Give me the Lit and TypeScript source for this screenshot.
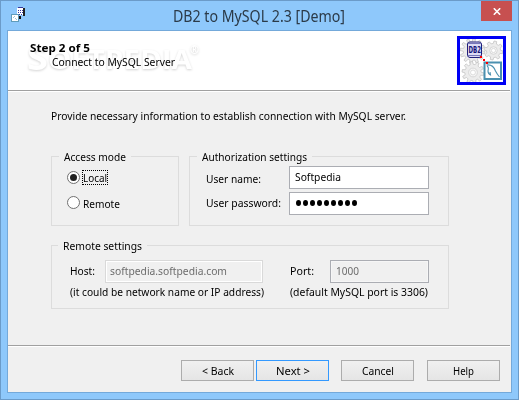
import { LitElement, html, css, svg } from "lit";
import { customElement, property, query } from "lit/decorators.js";

/** A line of text condensed or widened to an exact advance width. */
@customElement("fit-text")
class FitText extends LitElement {
  @property({ type: Number }) w = 0;
  @property() text = "";
  @query("span") span!: HTMLSpanElement;
  static styles = css`
    :host { display: block; height: 16px; line-height: 18px; white-space: pre; flex: none; }
    span { display: inline-block; transform-origin: 0 0; }
  `;
  render() { return html`<span>${this.text}</span>`; }
  updated() {
    this.style.width = this.w + "px";
    this.span.style.transform = `scaleX(${this.w / this.span.getBoundingClientRect().width})`;
  }
}

const t = (text: string, w: number, cls = "") => html`<fit-text class=${cls} .text=${text} .w=${w}></fit-text>`;

const gear = (cx: number, cy: number, r: number, n: number) => {
  let d = "";
  for (let i = 0; i < n; i++) {
    [[-0.3, 0.74], [-0.18, 1], [0.18, 1], [0.3, 0.74]].forEach(([o, k], j) => {
      const a = ((i + 0.25 + o) / n) * Math.PI * 2;
      d += `${i + j ? "L" : "M"}${(cx + Math.cos(a) * r * k).toFixed(2)} ${(cy + Math.sin(a) * r * k).toFixed(2)}`;
    });
  }
  return svg`<path d=${d + "Z"} fill="#ececec" stroke="#c4c4c4" stroke-width=".8"/>
    <circle cx=${cx} cy=${cy} r=${r * 0.4} fill="#f6f6f6" stroke="#cfcfcf" stroke-width=".8"/>
    <circle cx=${cx} cy=${cy} r=${r * 0.22} fill="#fff" stroke="#c9c9c9" stroke-width=".6"/>`;
};

@customElement("app-root")
class AppRoot extends LitElement {
  static styles = css`
    * { box-sizing: border-box; }
    :host { display: block; width: 519px; height: 400px; font: 11px/16px "Noto Sans", sans-serif; color: #000; }
    .window { width: 519px; height: 400px; border: 1px solid #6b9bc9; background: #8ec8fb; padding: 0 6px; display: flex; flex-direction: column; }
    .titlebar { height: 29px; display: flex; padding-left: 4px; flex: none; }
    .appicon { width: 15px; height: 15px; margin-top: 6px; flex: none; }
    .title { margin: 7px 0 0 147px; font-size: 15.5px; line-height: 16px; color: #2b3a48; }
    .close { margin-left: auto; width: 31px; height: 20px; background: #c75050; display: flex; align-items: center; justify-content: center; }
    .client { height: 363px; border: 1px solid #74a9da; background: #f0f0f0; display: flex; flex-direction: column; }
    .header { height: 59px; background: #fff; display: flex; justify-content: space-between; padding: 5px 5px 0 22px; position: relative; flex: none; }
    .headings { padding-top: 5px; position: relative; }
    .step, .connect { height: 14px; line-height: 14px; }
    .step { font-weight: 700; }
    .connect { margin-left: 22px; }
    .mark { position: absolute; left: 16px; top: 9px; filter: drop-shadow(0 1px 1px rgba(0, 0, 0, .17)); }
    .mark text { font-family: "Open Sans", sans-serif; font-weight: 700; fill: #fff; }
    .rule { height: 2px; border-top: 1px solid #a0a0a0; background: #fff; margin-right: 1px; flex: none; }
    .body { height: 253px; padding: 15px 60px 0 43px; flex: none; }
    .groups { display: flex; gap: 10px; margin-top: 33px; }
    .group { border: 1px solid #dcdcdc; height: 70px; position: relative; }
    .legend { position: absolute; left: 7px; top: -9px; background: #f0f0f0; padding: 0 5px; }
    .access { width: 128px; padding: 12px 0 0 15px; }
    .auth { width: 260px; padding: 9px 19px 0 16px; }
    .remote { width: 398px; height: 64px; margin-top: 19px; padding: 14px 0 0 18px; }
    .remote .legend { left: 6px; }
    .radio { display: flex; align-items: center; height: 17px; margin-bottom: 8px; }
    .radio svg { margin-right: 2px; flex: none; }
    .radio > fit-text { margin-left: 1px; }
    .focus { outline: 1px dotted #000; outline-offset: -1px; height: 15px; display: flex; width: 26px; padding-left: 1px; }
    .focus fit-text { margin-top: -1px; }
    .row { display: flex; height: 23px; margin-bottom: 3px; }
    .row > .lbl { margin-top: 4px; }
    .row > .pass { margin-top: 2px; }
    .field { border: 1px solid #abadb3; background: #fff; width: 140px; height: 23px; padding: 1px 0 0 5px; margin-left: auto; flex: none; }
    .field.dots { display: flex; gap: 2px; padding: 7px 0 0 6px; }
    .dots i { width: 5px; height: 6px; border-radius: 50%; background: #000; }
    .cols { display: flex; }
    .hostcol { width: 220px; }
    .portcol { width: 140px; }
    .line { display: flex; height: 23px; }
    .line > fit-text { margin-top: 2px; }
    .field.off { background: #f0f0f0; color: #6d6d6d; margin-left: 10px; box-shadow: inset 0 0 0 1px #fff; border-color: #d9d9d9; width: 158px; padding: 1px 0 0 4px; }
    .field.port { border-color: #abadb3; width: 99px; margin-left: 16px; padding-left: 5px; box-shadow: inset 0 0 0 1px #f6f6f6; }
    .footer { display: flex; padding: 13px 0 0 173px; height: 45px; }
    .btn { width: 73px; height: 21px; border: 1px solid #acacac; background: linear-gradient(#f0f0f0, #e5e5e5); display: flex; justify-content: center; padding-top: 1px; }
    .next { border-color: #3399ff; margin: 0 12px 0 2px; }
    .help { margin-left: 13px; }
    .db { font: 700 8px "DejaVu Sans Condensed", sans-serif; fill: #15157a; }
  `;
  group(cls: string, name: string, w: number, content: unknown) {
    return html`<div class="group ${cls}"><div class="legend">${t(name, w)}</div>${content}</div>`;
  }
  radio(on: boolean) {
    return html`<svg width="13" height="13" viewBox="0 0 13 13"><circle cx="6.5" cy="6.5" r="6" fill="#fff" stroke="#707070"/>${on ? svg`<circle cx="6.5" cy="6.5" r="3.5" fill="#202020"/>` : ""}</svg>`;
  }
  render() {
    return html`<div class="window">
      <div class="titlebar">
        <svg class="appicon" viewBox="0 0 15 15" shape-rendering="crispEdges">
          <path d="M6 1H12V8H6Z" fill="#fff"/><path d="M12 1H14V9H12Z" fill="#222"/><path d="M8 9H10V12H8Z" fill="#111"/>
          <path d="M7 0h5v1H7zM7 3h1v1H7zM9 3h1v1H9zM11 3h1v1h-1zM7 5h1v1H7zM9 5h1v1H9zM11 5h1v1h-1zM8 7h1v1H8zM10 7h1v1h-1z" fill="#3a3aa0"/>
          <path d="M0 7h8v8H0z" fill="#5f9cba"/><path d="M1 8h6v6H1z" fill="#fff"/><path d="M2 10h1v1H2zM3 9h1v1H3zM4 11h1v1H4zM5 12h1v1H5z" fill="#9cc6db"/>
        </svg>
        ${t("DB2 to MySQL 2.3 [Demo]", 172, "title")}
        <div class="close"><svg width="8" height="7" viewBox="0 0 8 7"><path d="M.8 .3 7.2 6.7M7.2 .3 .8 6.7" stroke="#fff" stroke-width="1.6"/></svg></div>
      </div>
      <div class="client">
        <div class="header">
          <svg class="mark" width="182" height="38" viewBox="0 0 182 38">
            <text x="3" y="30" font-size="34" textLength="21" lengthAdjust="spacingAndGlyphs">S</text>
            <text x="24" y="29" font-size="27" textLength="144" lengthAdjust="spacingAndGlyphs">OFTPEDIA</text>
            <text x="166" y="14" font-size="12" textLength="9" lengthAdjust="spacingAndGlyphs">®</text>
          </svg>
          <div class="headings">
            ${t("Step 2 of 5", 60, "step")}${t("Connect to MySQL Server", 123, "connect")}
          </div>
          <svg width="49" height="49" viewBox="0 0 49 49">
            <path d="M1.5 1.5H47.5V47.5H1.5Z" fill="#fff"/>
            ${gear(15.5, 15, 12.5, 12)}${gear(36.5, 14.5, 9.5, 8)}${gear(16, 36.5, 11, 10)}
            <path d="M1.5 1.5H47.5V47.5H1.5Z" fill="none" stroke="#0000f5" stroke-width="3"/>
            <path d="M10.5 7.5Q11 6 13 6H22Q24 6 24.500 7.500V19.500Q24 21.500 22 21.500H13Q11 21.500 10.500 19.500Z" fill="#dcdcf4" stroke="#20207c"/>
            <path d="M11 7.500H24M11 19.500H24" stroke="#7777b8"/>
            <text class="db" x="11.500" y="17" textLength="12.500" lengthAdjust="spacingAndGlyphs">DB2</text>
            <path d="M27.500 26.500H44V43H27.500Z" fill="#fff" stroke="#4a90b0" stroke-width="2"/>
            <path d="M29.500 29Q36 28 38.500 35Q40 38 42.500 41M30 30Q32 31 31 35Q31 38 33.500 39L33 36" fill="none" stroke="#4a90b0" stroke-width="1.100"/>
            <path d="M23 20h2v2h-2zM26 23h2v2h-2zM29 26h2v2h-2z" fill="#f00"/>
          </svg>
        </div>
        <div class="rule"></div>
        <div class="body">
          ${t("Provide necessary information to establish connection with MySQL server.", 355)}
          <div class="groups">
            ${this.group("access", "Access mode", 62, html`
              <div class="radio">${this.radio(true)}<div class="focus">${t("Local", 24)}</div></div>
              <div class="radio">${this.radio(false)}${t("Remote", 37)}</div>`)}
            ${this.group("auth", "Authorization settings", 105, html`
              <div class="row">${t("User name:", 55, "lbl")}<div class="field">${t("Softpedia", 46)}</div></div>
              <div class="row">${t("User password:", 75, "pass")}<div class="field dots">${Array.from({ length: 9 }, () => html`<i></i>`)}</div></div>`)}
          </div>
          ${this.group("remote", "Remote settings", 79, html`<div class="cols">
            <div class="hostcol"><div class="line">${t("Host:", 25)}<div class="field off">${t("softpedia.softpedia.com", 117)}</div></div>${t("(it could be network name or IP address)", 194)}</div>
            <div class="portcol"><div class="line">${t("Port:", 24)}<div class="field off port">${t("1000", 23)}</div></div>${t("(default MySQL port is 3306)", 138)}</div>
          </div>`)}
        </div>
        <div class="rule"></div>
        <div class="footer">
          <div class="btn">${t("< Back", 32)}</div><div class="btn next">${t("Next >", 34)}</div><div class="btn">${t("Cancel", 32)}</div><div class="btn help">${t("Help", 21)}</div>
        </div>
      </div>
    </div>`;
  }
}
